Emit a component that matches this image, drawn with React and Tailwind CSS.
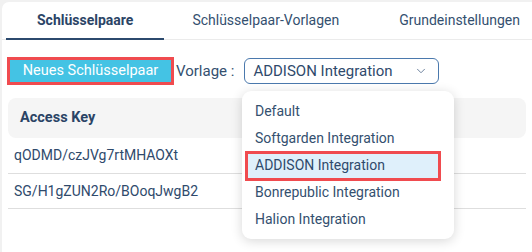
import { ChevronDown } from "lucide-react";

const OPTIONS = [
  "Default",
  "Softgarden Integration",
  "ADDISON Integration",
  "Bonrepublic Integration",
  "Halion Integration",
];

const ROWS = ["qODMD/czJVg7rtMHAOXt", "SG/H1gZUN2Ro/BOoqJwgB2"];

export default function App() {
  return (
    <div
      className="w-[532px] h-[252px] bg-[#f1f1f1] pt-[2px] pl-[2px] overflow-hidden"
      style={{ fontFamily: "Roboto, 'Noto Sans', sans-serif" }}
    >
      <div className="relative h-[250px] bg-white rounded-tl-[7px] text-[#2f4a6c]">
        {/* tabs */}
        <div className="flex h-[38px] border-b border-[#ebebeb] pl-[4px] whitespace-nowrap">
          <div className="relative shrink-0 flex items-center px-[31px] text-[14px] font-bold text-[#2b4466]">
            Schlüsselpaare
            <span className="absolute left-0 right-0 -bottom-px h-[2px] bg-[#2c4a6e]" />
          </div>
          <div className="shrink-0 flex items-center pl-[28px] pr-[30px] text-[14px] text-[#34506f]">Schlüsselpaar-Vorlagen</div>
          <div className="shrink-0 flex items-center px-[30px] text-[14px] text-[#34506f]">Grundeinstellungen</div>
        </div>

        {/* toolbar */}
        <div className="flex items-center mt-[17px] pl-[5px] h-[28px]">
          <button className="h-[28px] w-[167px] border-[3px] border-[#f04b4f] bg-[#44c3e4] text-white text-[14.5px] leading-none">
            Neues Schlüsselpaar
          </button>
          <span className="ml-[2px] text-[15px] text-[#34506f]">Vorlage :</span>
          <div className="ml-[10px] flex items-center justify-between w-[195px] h-[26px] rounded-[6px] border border-[#4b79ad] pl-[8px] pr-[10px]">
            <span className="text-[15px] text-[#2f4a6c]">ADDISON Integration</span>
            <ChevronDown size={14} strokeWidth={1.5} className="text-[#5a7191]" />
          </div>
        </div>

        {/* table */}
        <div className="mt-[13px] ml-[6px] mr-[6px]">
          <div className="h-[40px] flex items-center rounded-[8px] bg-[#f5f5f5] pl-[12px] text-[14.5px] font-bold text-[#2b4466]">
            Access Key
          </div>
          {ROWS.map((r, i) => (
            <div
              key={r}
              className={`flex items-center border-b border-[#dedede] pl-[6px] text-[14px] text-[#2f4a6c] ${i === 0 ? "h-[36px]" : "h-[35px]"}`}
            >
              {r}
            </div>
          ))}
        </div>

        {/* dropdown menu */}
        <div className="absolute left-[240px] top-[89px] w-[212px] h-[148px] rounded-[9px] bg-white shadow-[0_2px_12px_rgba(0,0,0,0.16)] pt-[7px]">
          {OPTIONS.map((o) =>
            o === "ADDISON Integration" ? (
              <div
                key={o}
                className="ml-[3px] w-[196px] h-[30px] -my-[1.5px] flex items-center border-[3px] border-[#f04b4f] bg-[#dff0fb] pl-[7px] text-[14px] text-[#2f4a6c]"
              >
                {o}
              </div>
            ) : (
              <div key={o} className="h-[27px] flex items-center pl-[13px] text-[14px] text-[#34506f]">
                {o}
              </div>
            )
          )}
        </div>
      </div>
    </div>
  );
}
